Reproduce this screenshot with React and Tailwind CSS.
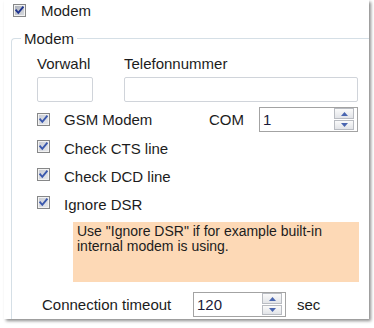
import React from "react";

function Check({ dark }) {
  return (
    <svg width="13" height="13" viewBox="0 0 13 13" className="shrink-0 block">
      <defs>
        <linearGradient id={dark ? "cbgd" : "cbg"} x1="0" y1="0" x2="1" y2="1">
          <stop offset="0" stopColor={dark ? "#aeb2bb" : "#c9ccd4"} />
          <stop offset="1" stopColor={dark ? "#d6d9de" : "#e6e8ec"} />
        </linearGradient>
      </defs>
      <rect x="0.5" y="0.5" width="12" height="12" fill="#f2f2f2" stroke="#868788" />
      <rect x="2" y="2" width="9" height="9" fill={`url(#${dark ? "cbgd" : "cbg"})`} />
      <path
        d="M3.2 6.4 L5.3 8.8 L9.8 3.4"
        fill="none"
        stroke={dark ? "#1f3590" : "#3a58ad"}
        strokeWidth="1.9"
        strokeLinecap="square"
      />
    </svg>
  );
}

function Arrow({ up }) {
  return (
    <svg width="7" height="4" viewBox="0 0 7 4" className="block">
      <path d={up ? "M0 4 L3.5 0 L7 4 Z" : "M0 0 L3.5 4 L7 0 Z"} fill="#4a66b0" />
    </svg>
  );
}

function Spinner({ value, wide }) {
  return (
    <div
      className={`flex h-[25px] border border-[#a3a3a3] bg-white ${wide ? "w-[99px]" : "w-[93px]"}`}
    >
      <span className="flex-1 pl-[3px] leading-[23px] text-[#1a1a3a]">{value}</span>
      <div className="flex flex-col w-[20px] mr-[3px] gap-[1px]">
        <div className="h-[11px] flex items-center justify-center border border-[#b9bcc2] bg-gradient-to-b from-[#fafafa] to-[#e2e4e8]">
          <Arrow up />
        </div>
        <div className="h-[10px] flex items-center justify-center border border-[#b9bcc2] bg-gradient-to-b from-[#fafafa] to-[#e2e4e8]">
          <Arrow />
        </div>
      </div>
    </div>
  );
}

function CheckRow({ label, className = "" }) {
  return (
    <div className={`flex items-start gap-[14px] h-[17px] ${className}`}>
      <Check />
      <span>{label}</span>
    </div>
  );
}

export default function App() {
  return (
    <div
      className="w-[374px] h-[328px] bg-white text-[15px] leading-[17px] text-[#1c1c1c]"
      style={{ fontFamily: '"Liberation Sans", Arial, sans-serif' }}
    >
      <div className="ml-[4px] w-[365px] h-[319px] bg-white overflow-hidden flex flex-col shadow-[2px_2px_3px_rgba(0,0,0,0.45)]">
        <div className="pt-[2px] pl-[9px] flex items-center gap-[15px] h-[19px]">
          <Check dark />
          <span>Modem</span>
        </div>
        <fieldset className="mt-[11px] ml-[7px] flex-1 border-l border-t border-[#d5dfe6] rounded-tl-[4px]">
          <legend className="ml-[9px] px-[3px]">Modem</legend>
          <div className="flex gap-[31px] pl-[25px] mt-[8px]">
            <div className="flex flex-col gap-[5px] w-[56px]">
              <span>Vorwahl</span>
              <div className="h-[25px] w-[56px] border border-[#d0d4da] rounded-[2px] bg-white" />
            </div>
            <div className="flex flex-col gap-[5px] w-[234px]">
              <span>Telefonnummer</span>
              <div className="h-[25px] w-[234px] border border-[#d0d4da] rounded-[2px] bg-white" />
            </div>
          </div>
          <div className="flex items-center pl-[25px] mt-[5px] h-[25px]">
            <div className="flex items-center gap-[14px] w-[172px]">
              <Check />
              <span>GSM Modem</span>
            </div>
            <span className="w-[50px]">COM</span>
            <Spinner value="1" wide />
          </div>
          <CheckRow label="Check CTS line" className="pl-[25px] mt-[8px]" />
          <CheckRow label="Check DCD line" className="pl-[25px] mt-[11px]" />
          <CheckRow label="Ignore DSR" className="pl-[25px] mt-[11px]" />
          <div className="ml-[61px] mt-[9px] w-[286px] h-[60px] bg-[#fdd9b6] pt-[2px] pl-[4px] text-[14px] leading-[15px]">
            Use "Ignore DSR" if for example built-in internal modem is using.
          </div>
          <div className="flex items-center pl-[30px] mt-[10px] h-[25px]">
            <span className="w-[151px]">Connection timeout</span>
            <Spinner value="120" />
            <span className="ml-[11px]">sec</span>
          </div>
        </fieldset>
      </div>
    </div>
  );
}
